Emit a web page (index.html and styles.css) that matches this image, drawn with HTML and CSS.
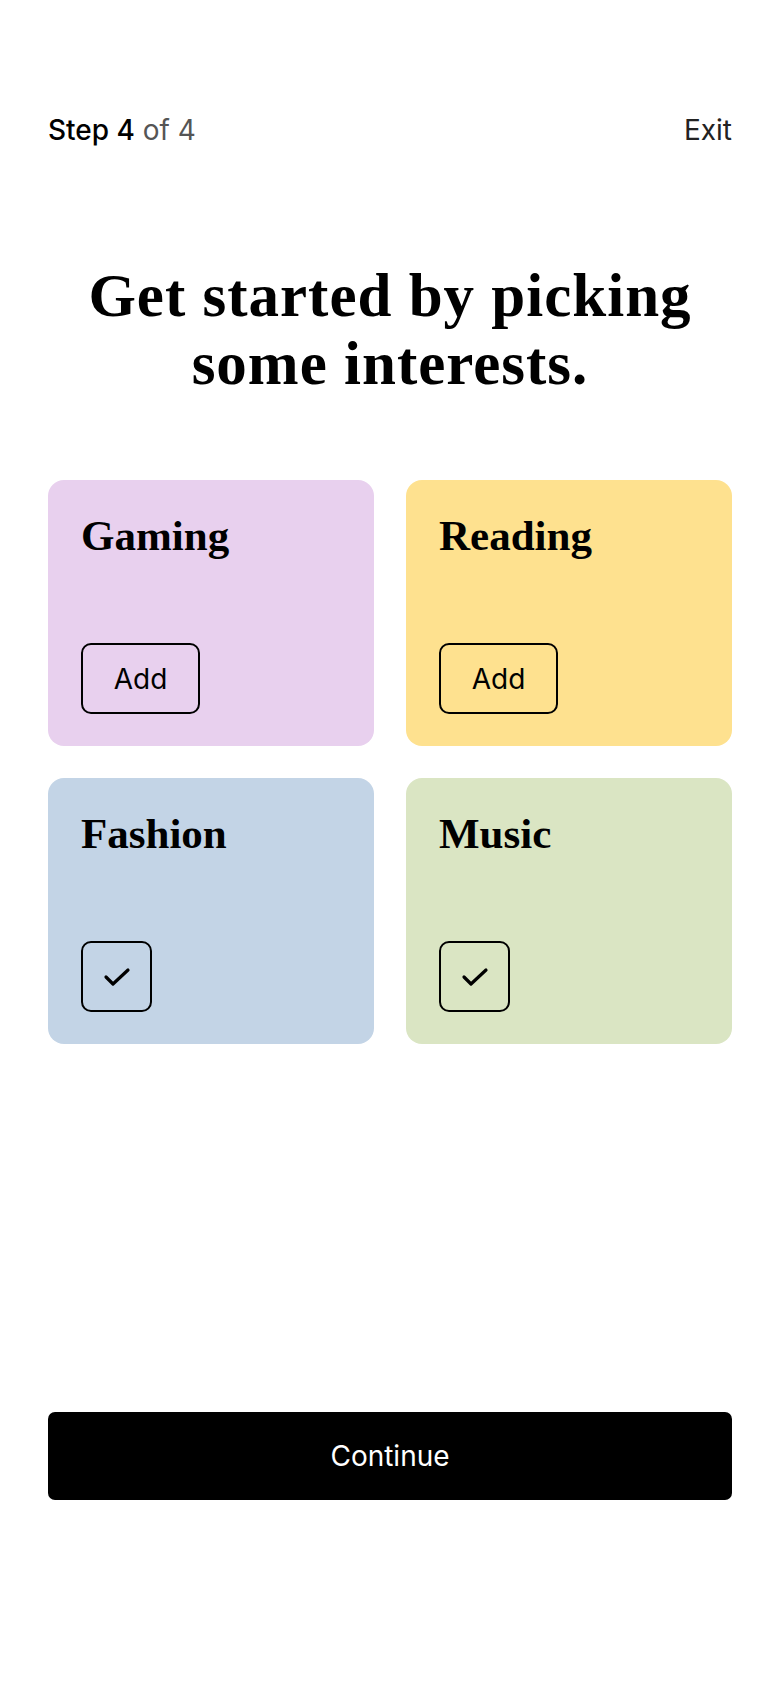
FILE: index.html
```html
<!DOCTYPE html>
<html lang="en">
<head>
    <meta charset="UTF-8">
    <meta name="viewport" content="width=device-width, initial-scale=1.0">
    <title>Pick interests</title>
    <link rel="stylesheet" href="styles.css">
</head>
<body>
    <div class="page">
        <header class="topbar">
            <p class="step"><span class="step-now">Step 4</span> of 4</p>
            <a class="exit" href="#">Exit</a>
        </header>

        <h1 class="title">Get started by picking<br>some interests.</h1>

        <div class="interests">
            <div class="card card-gaming">
                <h2>Gaming</h2>
                <button class="add-btn">Add</button>
            </div>
            <div class="card card-reading">
                <h2>Reading</h2>
                <button class="add-btn">Add</button>
            </div>
            <div class="card card-fashion">
                <h2>Fashion</h2>
                <button class="check-btn" aria-label="Added">
                    <svg width="28" height="20" viewBox="0 0 28 20"><polyline points="3,10 10,17 25,3" fill="none" stroke="#000" stroke-width="3.2" stroke-linecap="round" stroke-linejoin="round"/></svg>
                </button>
            </div>
            <div class="card card-music">
                <h2>Music</h2>
                <button class="check-btn" aria-label="Added">
                    <svg width="28" height="20" viewBox="0 0 28 20"><polyline points="3,10 10,17 25,3" fill="none" stroke="#000" stroke-width="3.2" stroke-linecap="round" stroke-linejoin="round"/></svg>
                </button>
            </div>
        </div>

        <button class="continue">Continue</button>
    </div>
</body>
</html>
```

FILE: styles.css
```css
* {
    box-sizing: border-box;
}

body {
    margin: 0;
    padding: 0;
    background: #fff;
    font-family: Inter, "Noto Sans", sans-serif;
    color: #000;
}

.page {
    min-height: 1688px;
    padding: 114px 48px 188px;
    display: flex;
    flex-direction: column;
}

.topbar {
    display: flex;
    justify-content: space-between;
    align-items: center;
    height: 32px;
}

.step {
    margin: 0;
    font-size: 28px;
    line-height: 32px;
    color: #555;
}

.step-now {
    color: #000;
    font-weight: 500;
}

.exit {
    font-size: 28px;
    line-height: 32px;
    color: #222;
    text-decoration: none;
}

.title {
    margin: 116px 0 82px;
    font-family: "Liberation Serif", serif;
    font-weight: bold;
    font-size: 61px;
    line-height: 68px;
    letter-spacing: 1px;
    text-align: center;
}

.interests {
    display: grid;
    grid-template-columns: 1fr 1fr;
    gap: 32px;
}

.card {
    height: 266px;
    padding: 32px 33px;
    border-radius: 16px;
    display: flex;
    flex-direction: column;
    justify-content: space-between;
    align-items: flex-start;
}

.card h2 {
    margin: 0;
    font-family: "Liberation Serif", serif;
    font-weight: bold;
    font-size: 43px;
    line-height: 48px;
}

.card-gaming {
    background: #e8d0ee;
}

.card-reading {
    background: #fee18f;
}

.card-fashion {
    background: #c3d4e6;
}

.card-music {
    background: #dae5c3;
}

.add-btn,
.check-btn {
    height: 71px;
    border: 2px solid #000;
    border-radius: 10px;
    background: transparent;
    color: #000;
    font-family: Inter, "Noto Sans", sans-serif;
    font-size: 28px;
    cursor: pointer;
}

.add-btn {
    width: 119px;
}

.check-btn {
    width: 71px;
    display: flex;
    align-items: center;
    justify-content: center;
    padding: 0;
}

.continue {
    margin-top: auto;
    width: 100%;
    height: 88px;
    border: none;
    border-radius: 7px;
    background: #000;
    color: #fff;
    font-family: Inter, "Noto Sans", sans-serif;
    font-size: 28px;
    cursor: pointer;
}
```
